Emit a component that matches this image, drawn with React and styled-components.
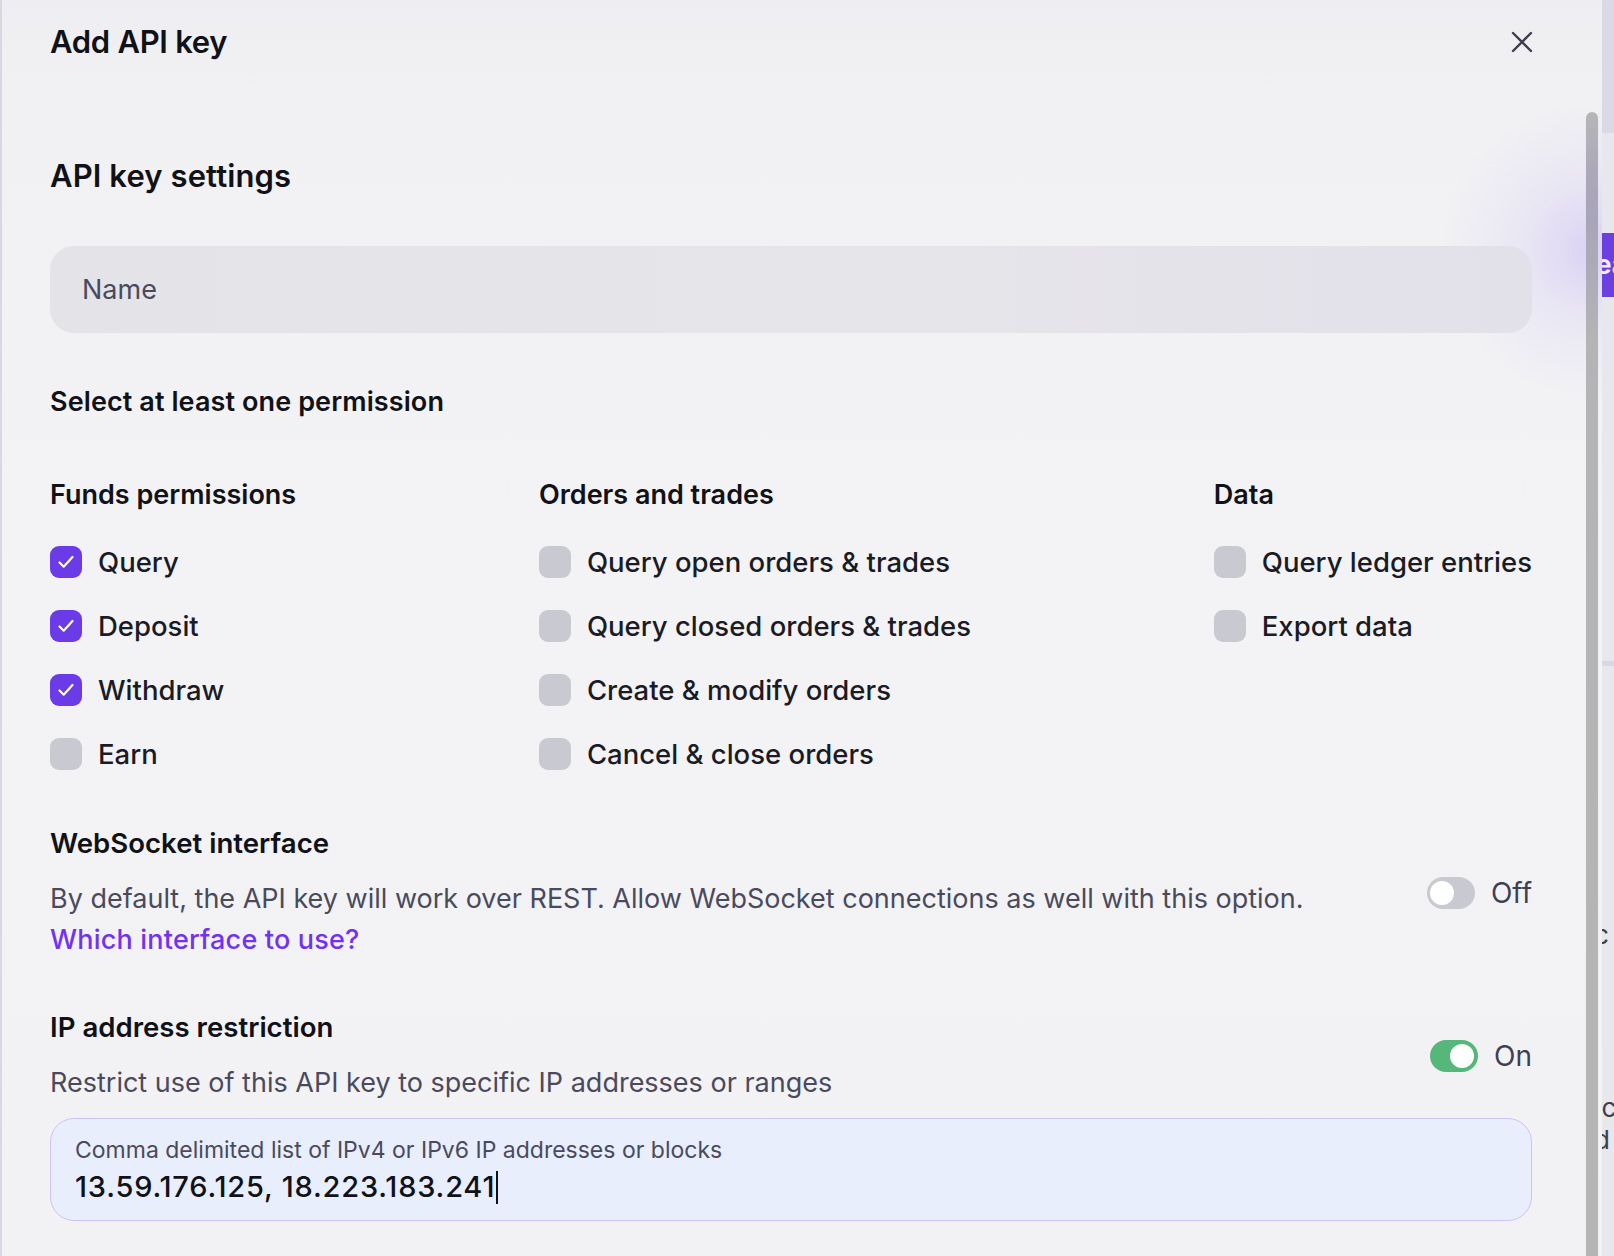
import React from 'react';
import styled, { createGlobalStyle } from 'styled-components';

const GlobalStyle = createGlobalStyle`
  html, body {
    margin: 0;
    padding: 0;
    height: 100%;
    overflow: hidden;
  }
  body {
    font-family: Inter, "Noto Sans", "Liberation Sans", sans-serif;
    color: #121219;
    background: #e8e7ed;
  }
`;

const Page = styled.div`
  display: flex;
  height: 1256px;
  width: 1614px;
`;

const LeftEdge = styled.div`
  width: 2px;
  background: #d9d7e0;
`;

const RightEdge = styled.div`
  width: 12px;
  display: flex;
  flex-direction: column;
  background: #e8e7ee;
  overflow: hidden;
  color: #3d3d4f;
  font-size: 26px;
`;

const EdgeTop = styled.div`
  height: 133px;
  background: #dcd9e7;
`;

const EdgeButton = styled.div`
  margin-top: 100px;
  height: 64px;
  background: #6b3fe0;
  color: #f1ecff;
  font-weight: 700;
  font-size: 26px;
  line-height: 64px;
  text-indent: -6px;
  white-space: nowrap;
`;

const EdgeBand = styled.div`
  margin-top: 364px;
  height: 5px;
  background: #d9d6e6;
`;

const EdgeText = styled.div`
  margin-top: ${({ top }) => top}px;
  line-height: 28px;
  text-indent: -8px;
  white-space: nowrap;
`;

const Modal = styled.div`
  flex: 1;
  display: flex;
  background:
    radial-gradient(circle at 1590px 250px, rgba(190, 172, 245, 0.45) 0, rgba(200, 186, 245, 0.2) 70px, rgba(242, 242, 245, 0) 150px),
    linear-gradient(180deg, #eeedf1 0, #f1f1f3 90px, #f3f3f5 600px, #f2f2f4 100%);
`;

const Column = styled.div`
  flex: 1;
  display: flex;
  flex-direction: column;
  padding: 0 54px 0 48px;
`;

const Header = styled.div`
  height: 83px;
  display: flex;
  align-items: center;
  justify-content: space-between;
`;

const Title = styled.h1`
  margin: 0;
  font-size: 31px;
  line-height: 40px;
  font-weight: 600;
  color: #111118;
  letter-spacing: -0.3px;
`;

const CloseButton = styled.button`
  width: 24px;
  height: 24px;
  margin-right: -2px;
  padding: 0;
  border: 0;
  background: none;
  color: #3d3d4e;
  display: flex;
  align-items: center;
  justify-content: center;
`;

const SectionTitle = styled.h2`
  margin: 74px 0 0;
  font-size: 31px;
  line-height: 38px;
  font-weight: 600;
  color: #111118;
  letter-spacing: 0.1px;
`;

const NameInput = styled.div`
  margin-top: 51px;
  height: 87px;
  border-radius: 24px;
  background: linear-gradient(90deg, #e4e3e8 0, #e6e5ea 60%, #e2e0e9 100%);
  display: flex;
  align-items: center;
  padding: 0 32px;
  font-size: 27px;
  color: #4a4a5d;
`;

const Prompt = styled.div`
  margin-top: 51px;
  font-size: 27px;
  line-height: 36px;
  font-weight: 600;
  color: #111118;
  letter-spacing: 0.1px;
`;

const Groups = styled.div`
  margin-top: 57px;
  display: flex;
  justify-content: space-between;
`;

const Group = styled.div`
  display: flex;
  flex-direction: column;
`;

const GroupTitle = styled.div`
  font-size: 27px;
  line-height: 36px;
  font-weight: 600;
  color: #111118;
  margin-bottom: 33px;
`;

const OptionList = styled.div`
  display: flex;
  flex-direction: column;
  gap: 32px;
`;

const Option = styled.label`
  display: flex;
  align-items: center;
  gap: 16px;
  height: 32px;
  font-size: 27.5px;
  font-weight: 500;
  color: #1b1b26;
  white-space: nowrap;
`;

const Box = styled.span`
  width: 32px;
  height: 32px;
  flex: none;
  border-radius: 9px;
  background: ${({ checked }) => (checked ? '#6b3be8' : '#c9c9d1')};
  display: flex;
  align-items: center;
  justify-content: center;
`;

const Setting = styled.div`
  margin-top: ${({ gapTop }) => gapTop}px;
  display: flex;
  align-items: center;
  justify-content: space-between;
  gap: 40px;
`;

const SettingText = styled.div`
  display: flex;
  flex-direction: column;
`;

const SettingTitle = styled.div`
  font-size: 27.6px;
  line-height: 36px;
  font-weight: 600;
  color: #111118;
  margin-bottom: 17px;
`;

const Description = styled.div`
  font-size: 27px;
  line-height: 41px;
  color: #4a4a5d;
`;

const Link = styled.a`
  display: block;
  color: #7132f5;
  font-weight: 500;
  letter-spacing: 0.2px;
  text-decoration: none;
`;

const ToggleWrap = styled.div`
  display: flex;
  align-items: center;
  gap: 16px;
  font-size: 28px;
  color: #3f3f52;
`;

const Track = styled.span`
  position: relative;
  width: 48px;
  height: 32px;
  border-radius: 16px;
  background: ${({ on }) => (on ? '#56b77b' : '#c9c9d1')};
`;

const Knob = styled.span`
  position: absolute;
  top: 4px;
  left: ${({ on }) => (on ? '20px' : '3px')};
  width: 24px;
  height: 24px;
  border-radius: 50%;
  background: #ffffff;
`;

const IpBox = styled.div`
  margin-top: 15px;
  height: 103px;
  box-sizing: border-box;
  border: 1px solid #cfc2f6;
  border-radius: 24px;
  background: #e8eefb;
  padding: 17px 24px 0;
`;

const IpLabel = styled.div`
  font-size: 23px;
  line-height: 28px;
  color: #4a4a5d;
`;

const IpValue = styled.div`
  margin-top: 6px;
  font-size: 29px;
  line-height: 34px;
  font-weight: 500;
  letter-spacing: 0.8px;
  color: #111118;
  display: flex;
  align-items: center;
`;

const Caret = styled.span`
  width: 2px;
  height: 33px;
  margin-left: 1px;
  background: #111118;
`;

const ScrollRail = styled.div`
  width: 12px;
  margin: 112px 4px 0 0;
  border-radius: 6px 6px 0 0;
  background: linear-gradient(180deg, #b6b6b8 0, #aca8ba 60px, #a9a5b8 110px, #b4b4b6 230px, #b5b5b5 100%);
`;

const Check = () => (
  <svg width="22" height="22" viewBox="0 0 22 22" fill="none">
    <path d="M4.5 11.5l4.2 4.2L17.5 6" stroke="#fff" strokeWidth="2.2" strokeLinecap="round" strokeLinejoin="round" />
  </svg>
);

const groups = [
  {
    title: 'Funds permissions',
    items: [
      ['Query', true],
      ['Deposit', true],
      ['Withdraw', true],
      ['Earn', false],
    ],
  },
  {
    title: 'Orders and trades',
    items: [
      ['Query open orders & trades', false],
      ['Query closed orders & trades', false],
      ['Create & modify orders', false],
      ['Cancel & close orders', false],
    ],
  },
  {
    title: 'Data',
    items: [
      ['Query ledger entries', false],
      ['Export data', false],
    ],
  },
];

const Toggle = ({ on, label }) => (
  <ToggleWrap>
    <Track on={on ? 1 : 0}>
      <Knob on={on ? 1 : 0} />
    </Track>
    {label}
  </ToggleWrap>
);

const App = () => (
  <>
    <GlobalStyle />
    <Page>
      <LeftEdge />
      <Modal>
        <Column>
          <Header>
            <Title>Add API key</Title>
            <CloseButton aria-label="Close">
              <svg width="22" height="22" viewBox="0 0 22 22" fill="none">
                <path d="M2 2l18 18M20 2L2 20" stroke="currentColor" strokeWidth="2.4" strokeLinecap="round" />
              </svg>
            </CloseButton>
          </Header>

          <SectionTitle>API key settings</SectionTitle>
          <NameInput>Name</NameInput>

          <Prompt>Select at least one permission</Prompt>

          <Groups>
            {groups.map((g) => (
              <Group key={g.title}>
                <GroupTitle>{g.title}</GroupTitle>
                <OptionList>
                  {g.items.map(([label, checked]) => (
                    <Option key={label}>
                      <Box checked={checked}>{checked && <Check />}</Box>
                      {label}
                    </Option>
                  ))}
                </OptionList>
              </Group>
            ))}
          </Groups>

          <Setting gapTop={55}>
            <SettingText>
              <SettingTitle>WebSocket interface</SettingTitle>
              <Description>
                By default, the API key will work over REST. Allow WebSocket connections as well with this option.
                <Link href="#">Which interface to use?</Link>
              </Description>
            </SettingText>
            <Toggle on={false} label="Off" />
          </Setting>

          <Setting gapTop={49}>
            <SettingText>
              <SettingTitle>IP address restriction</SettingTitle>
              <Description>Restrict use of this API key to specific IP addresses or ranges</Description>
            </SettingText>
            <Toggle on label="On" />
          </Setting>

          <IpBox>
            <IpLabel>Comma delimited list of IPv4 or IPv6 IP addresses or blocks</IpLabel>
            <IpValue>
              13.59.176.125, 18.223.183.241
              <Caret />
            </IpValue>
          </IpBox>
        </Column>
        <ScrollRail />
      </Modal>
      <RightEdge>
        <EdgeTop />
        <EdgeButton>ea</EdgeButton>
        <EdgeBand />
        <EdgeText top={255}>c</EdgeText>
        <EdgeText top={145}>:c</EdgeText>
        <EdgeText top={4}>d</EdgeText>
      </RightEdge>
    </Page>
  </>
);

export default App;
